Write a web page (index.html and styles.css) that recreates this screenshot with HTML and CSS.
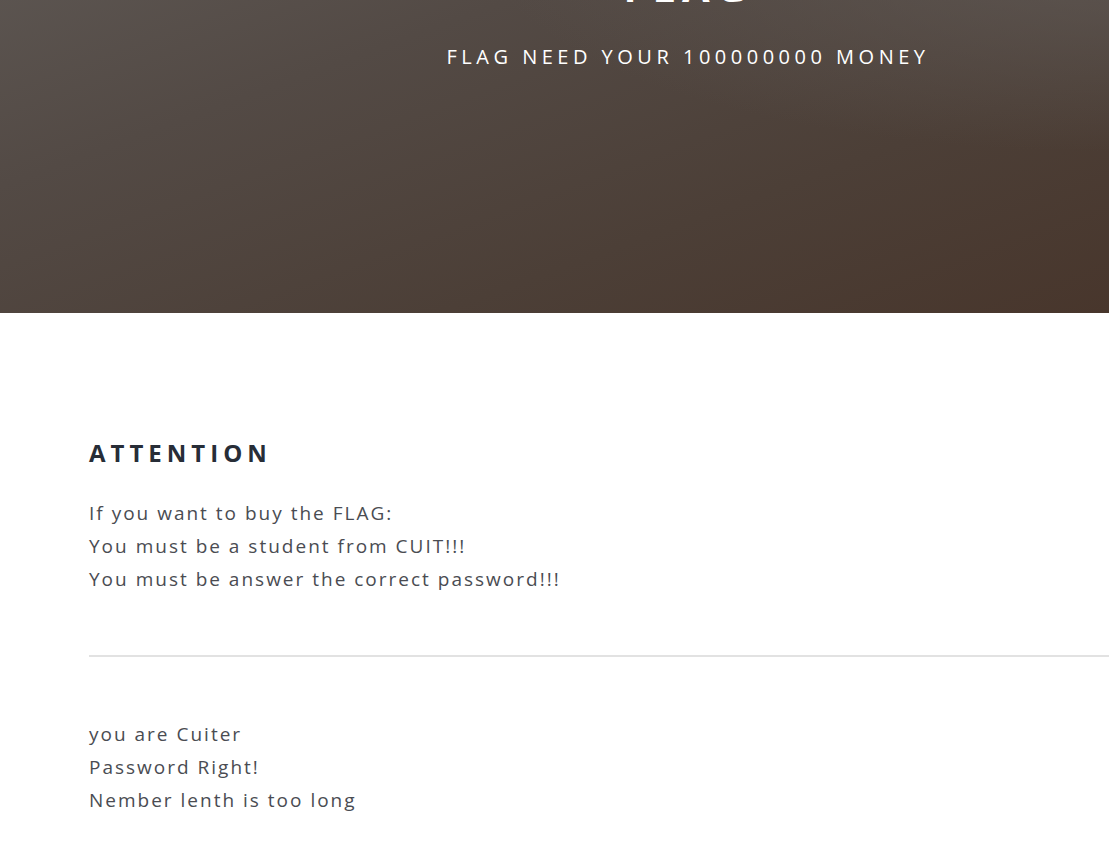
FILE: index.html
```html
<!DOCTYPE html>
<html>
<head>
<meta charset="utf-8">
<link rel="stylesheet" href="styles.css">
</head>
<body>
<header class="hero">
  <div class="hero-inner">
    <h1 class="hero-title">FLAG</h1>
    <p class="hero-sub">FLAG NEED YOUR 100000000 MONEY</p>
  </div>
</header>
<main class="content">
  <h2 class="section-title">ATTENTION</h2>
  <p class="text">If you want to buy the FLAG:<br>You must be a student from CUIT!!!<br>You must be answer the correct password!!!</p>
  <hr class="divider">
  <p class="text result">you are Cuiter<br>Password Right!<br>Nember lenth is too long</p>
</main>
</body>
</html>
```
FILE: styles.css
```css
html, body {
  margin: 0;
  padding: 0;
  overflow: hidden;
}
body {
  font-family: "Open Sans", "Liberation Sans", sans-serif;
  background: #fff;
  width: 1109px;
  height: 846px;
}
.hero {
  height: 413px;
  margin-top: -100px;
  background:
    radial-gradient(ellipse at 100% 10%, rgba(95, 88, 84, 0.9) 0%, rgba(95, 88, 84, 0) 40%),
    linear-gradient(160deg, #5f5955 0%, #534a45 35%, #4c3f37 70%, #48362c 100%);
  overflow: hidden;
}
.hero-inner {
  padding-left: 267px;
  text-align: center;
  color: #fff;
}
.hero-title {
  margin: 0;
  padding-top: 62px;
  font-size: 40px;
  font-weight: 700;
  letter-spacing: 7px;
  line-height: 50px;
}
.hero-sub {
  margin: 33px 0 0;
  font-size: 20px;
  letter-spacing: 4.5px;
  line-height: 24px;
}
.content {
  padding: 0 0 0 89px;
}
.section-title {
  margin: 0;
  padding-top: 125px;
  font-size: 24px;
  font-weight: 700;
  letter-spacing: 5px;
  color: #272d37;
  line-height: 30px;
}
.text {
  margin: 29px 0 0;
  font-size: 19px;
  letter-spacing: 2px;
  line-height: 33px;
  color: #4a4c52;
}
.divider {
  margin: 59px 0 0;
  border: 0;
  height: 2px;
  background: #e2e2e2;
}
.result {
  margin-top: 61px;
}
```
